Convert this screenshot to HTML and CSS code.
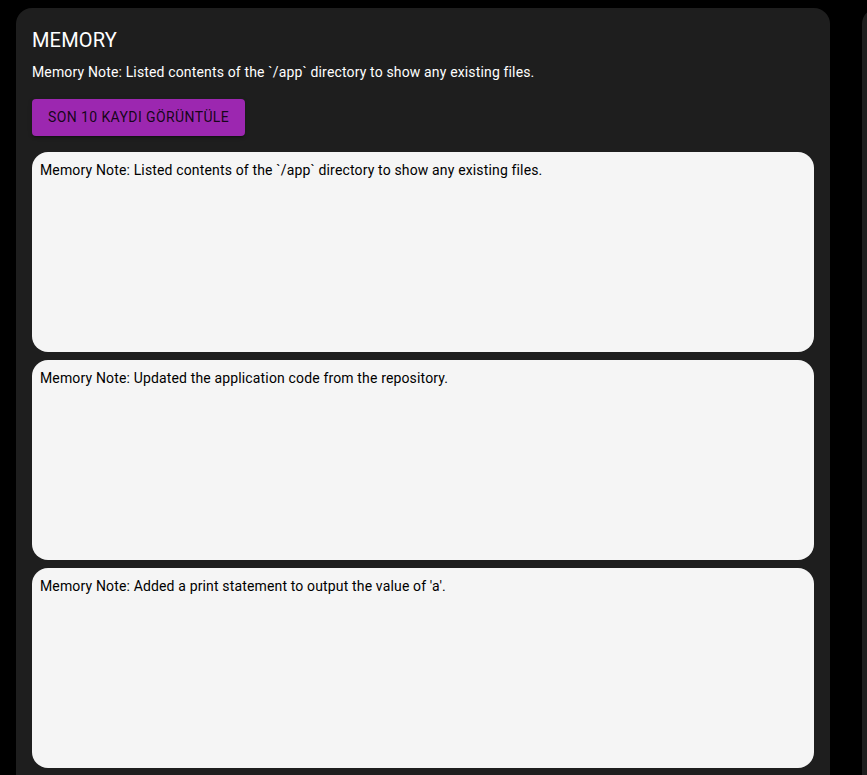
FILE: index.html
```html
<!DOCTYPE html>
<html lang="en">
<head>
<meta charset="utf-8">
<title>Memory</title>
<link rel="stylesheet" href="styles.css">
</head>
<body>
<div class="layout">
  <section class="card">
    <h2 class="title">MEMORY</h2>
    <p class="subtitle">Memory Note: Listed contents of the `/app` directory to show any existing files.</p>
    <button class="btn" type="button">SON 10 KAYDI GÖRÜNTÜLE</button>
    <div class="list">
      <div class="note">Memory Note: Listed contents of the `/app` directory to show any existing files.</div>
      <div class="note">Memory Note: Updated the application code from the repository.</div>
      <div class="note">Memory Note: Added a print statement to output the value of 'a'.</div>
    </div>
  </section>
  <section class="card side"></section>
</div>
</body>
</html>
```

FILE: styles.css
```css
html, body {
  margin: 0;
  padding: 0;
  background: #000;
  overflow: hidden;
  height: 100%;
}

body {
  font-family: Roboto, "Liberation Sans", Arial, sans-serif;
}

.layout {
  display: flex;
  gap: 32px;
  padding: 8px 16px;
}

.card {
  flex: 0 0 814px;
  box-sizing: border-box;
  background: #1e1e1e;
  border-radius: 16px;
  padding: 16px;
  color: #fff;
  min-height: 900px;
}

.title {
  margin: 0 0 6px;
  font-size: 20px;
  font-weight: 400;
  line-height: 32px;
  letter-spacing: 0.15px;
}

.subtitle {
  margin: 0 0 17px;
  font-size: 14px;
  line-height: 20px;
  letter-spacing: 0.15px;
}

.btn {
  display: block;
  padding: 6px 16px;
  line-height: 24.5px;
  border: none;
  border-radius: 4px;
  background: #9c27b0;
  color: rgba(0, 0, 0, 0.87);
  font-family: inherit;
  font-size: 14px;
  font-weight: 400;
  letter-spacing: 0.4px;
  box-shadow: 0 3px 1px -2px rgba(0,0,0,0.2), 0 2px 2px 0 rgba(0,0,0,0.14), 0 1px 5px 0 rgba(0,0,0,0.12);
  margin-bottom: 16px;
}

.list {
  display: flex;
  flex-direction: column;
  gap: 8px;
}

.note {
  height: 200px;
  box-sizing: border-box;
  background: #f5f5f5;
  color: #000;
  border-radius: 16px;
  padding: 8px;
  font-size: 14px;
  line-height: 20px;
  letter-spacing: 0.15px;
}
```
